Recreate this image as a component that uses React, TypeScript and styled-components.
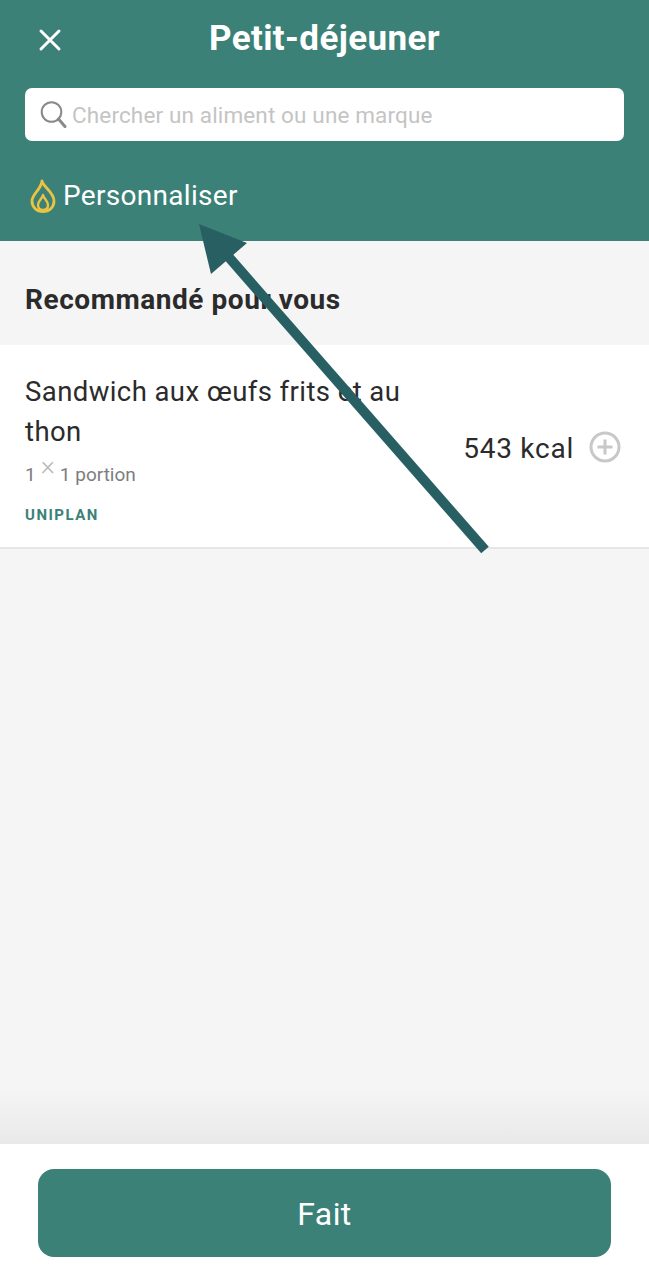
import React from "react";
import styled, { createGlobalStyle } from "styled-components";

const Global = createGlobalStyle`
  html, body { margin: 0; padding: 0; background: #f5f5f6; }
  * { box-sizing: border-box; }
`;
const Page = styled.div`
  position: relative; width: 649px; height: 1280px; overflow: hidden;
  display: flex; flex-direction: column; background: #f5f5f6;
  font-family: Roboto, "Noto Sans", sans-serif; color: #2b2b2b;
`;
const Header = styled.header`
  height: 241px; background: #3b8177; padding: 0 25px; display: flex; flex-direction: column;
`;
const TitleBar = styled.div`
  height: 88px; display: flex; align-items: flex-start; position: relative; justify-content: center;
`;
const Title = styled.h1`
  margin: 16px 0 0; font-size: 35px; line-height: 46px; font-weight: 700; color: #fff; letter-spacing: 0.4px;
`;
const Close = styled.button`
  position: absolute; left: 12px; top: 28px; width: 26px; height: 24px; padding: 0; border: 0; background: none; display: block;
`;
const Search = styled.div`
  height: 53px; background: #fff; border-radius: 7px; display: flex; align-items: center; padding-left: 15px; gap: 5px;
`;
const Placeholder = styled.span`
  font-size: 22.5px; color: #c4c4c4; letter-spacing: 0.14px; line-height: 1; margin-top: 1px;
`;
const Personalize = styled.div`
  margin-top: 37px; padding-left: 5px; display: flex; align-items: center; gap: 7px; height: 36px;
`;
const PersonalizeText = styled.span`
  color: #fff; font-size: 28px; letter-spacing: 0.3px; line-height: 36px;
`;
const SectionTitle = styled.h2`
  margin: 0; height: 104px; padding: 42px 25px 0; font-size: 28px; line-height: 34px; font-weight: 700; color: #2b2b2b; letter-spacing: 0.55px;
`;
const Row = styled.div`
  height: 204px; background: #fff; border-bottom: 2px solid #e6e6e6; padding: 0 28px 0 25px;
  display: flex; align-items: center;
`;
const Info = styled.div`
  flex: 1; align-self: flex-start; padding-top: 27px;
`;
const Name = styled.div`
  width: 400px; font-size: 27.5px; line-height: 40px; letter-spacing: 0.42px;
`;
const Portion = styled.div`
  margin-top: 9px; font-size: 19px; line-height: 28px; color: #7d7d7d; display: flex; gap: 5px;
`;
const Times = styled.span`
  font-size: 27px; font-weight: 300; line-height: 10px; color: #b9b9b9;
`;
const Brand = styled.div`
  margin-top: 16px; font-size: 15px; line-height: 20px; font-weight: 700; color: #3b8177; letter-spacing: 1.5px;
`;
const Kcal = styled.div`
  font-size: 28px; line-height: 36px; margin: 5px 15px 0 0; letter-spacing: 0.75px;
`;
const PlusIcon = styled.svg`
  width: 32px; height: 32px; flex: none; margin-top: 1px;
`;
const Spacer = styled.div`
  flex: 1;
`;
const Footer = styled.footer`
  height: 136px; background: #fff; padding: 25px 38px 0; position: relative;
  &::before {
    content: ""; position: absolute; left: 0; right: 0; top: -56px; height: 56px;
    background: linear-gradient(to bottom, rgba(233,233,233,0), #e9e9e9);
  }
`;
const Done = styled.button`
  display: block; width: 100%; height: 88px; border: 0; border-radius: 16px; background: #3b8177; color: #fff;
  font: 400 32px/90px Roboto, "Noto Sans", sans-serif; letter-spacing: 0.4px; padding: 0;
`;
const Arrow = styled.svg`
  position: absolute; left: 0; top: 0; width: 649px; height: 1280px; pointer-events: none;
`;

export default function App() {
  return (
    <Page>
      <Global />
      <Header>
        <TitleBar>
          <Close aria-label="Fermer">
            <svg width="26" height="24" viewBox="0 0 26 24"><path d="M4 3 L22 21 M22 3 L4 21" stroke="#fff" strokeWidth="3" strokeLinecap="round" /></svg>
          </Close>
          <Title>Petit-déjeuner</Title>
        </TitleBar>
        <Search>
          <svg width="27" height="27" viewBox="0 0 27 27"><circle cx="11.5" cy="11" r="9.8" fill="none" stroke="#8a8a8a" strokeWidth="2" /><path d="M18.5 18 L25 25.5" stroke="#8a8a8a" strokeWidth="3" strokeLinecap="round" /></svg>
          <Placeholder>Chercher un aliment ou une marque</Placeholder>
        </Search>
        <Personalize>
          <svg width="26" height="34" viewBox="0 0 26 34" fill="none" stroke="#e9c341" strokeWidth="2.8" strokeLinejoin="round">
            <path d="M12 2 C13 8 24 13 24 22 C24 28.5 19 32.5 13 32.5 C7 32.5 2 28.5 2 22 C2 15 11 11 12 2 Z" />
            <path d="M13 16 C14 20 18 22 18 26 C18 29 16 31 13 31 C10 31 8 29 8 26 C8 22 12 20 13 16 Z" strokeWidth="2.4" />
          </svg>
          <PersonalizeText>Personnaliser</PersonalizeText>
        </Personalize>
      </Header>
      <SectionTitle>Recommandé pour vous</SectionTitle>
      <Row>
        <Info>
          <Name>Sandwich aux œufs frits et au thon</Name>
          <Portion>1 <Times>×</Times> 1 portion</Portion>
          <Brand>UNIPLAN</Brand>
        </Info>
        <Kcal>543 kcal</Kcal>
        <PlusIcon viewBox="0 0 32 32" fill="none" stroke="#c8c8c8">
          <circle cx="16" cy="16" r="14" strokeWidth="3" />
          <path d="M16 8.5 V23.5 M8.5 16 H23.5" strokeWidth="3" />
        </PlusIcon>
      </Row>
      <Spacer />
      <Footer>
        <Done>Fait</Done>
      </Footer>
      <Arrow viewBox="0 0 649 1280">
        <path d="M485 550 L226 254" stroke="#285f62" strokeWidth="10" fill="none" />
        <path d="M199 224 L247 243 L211 274 Z" fill="#285f62" />
      </Arrow>
    </Page>
  );
}
